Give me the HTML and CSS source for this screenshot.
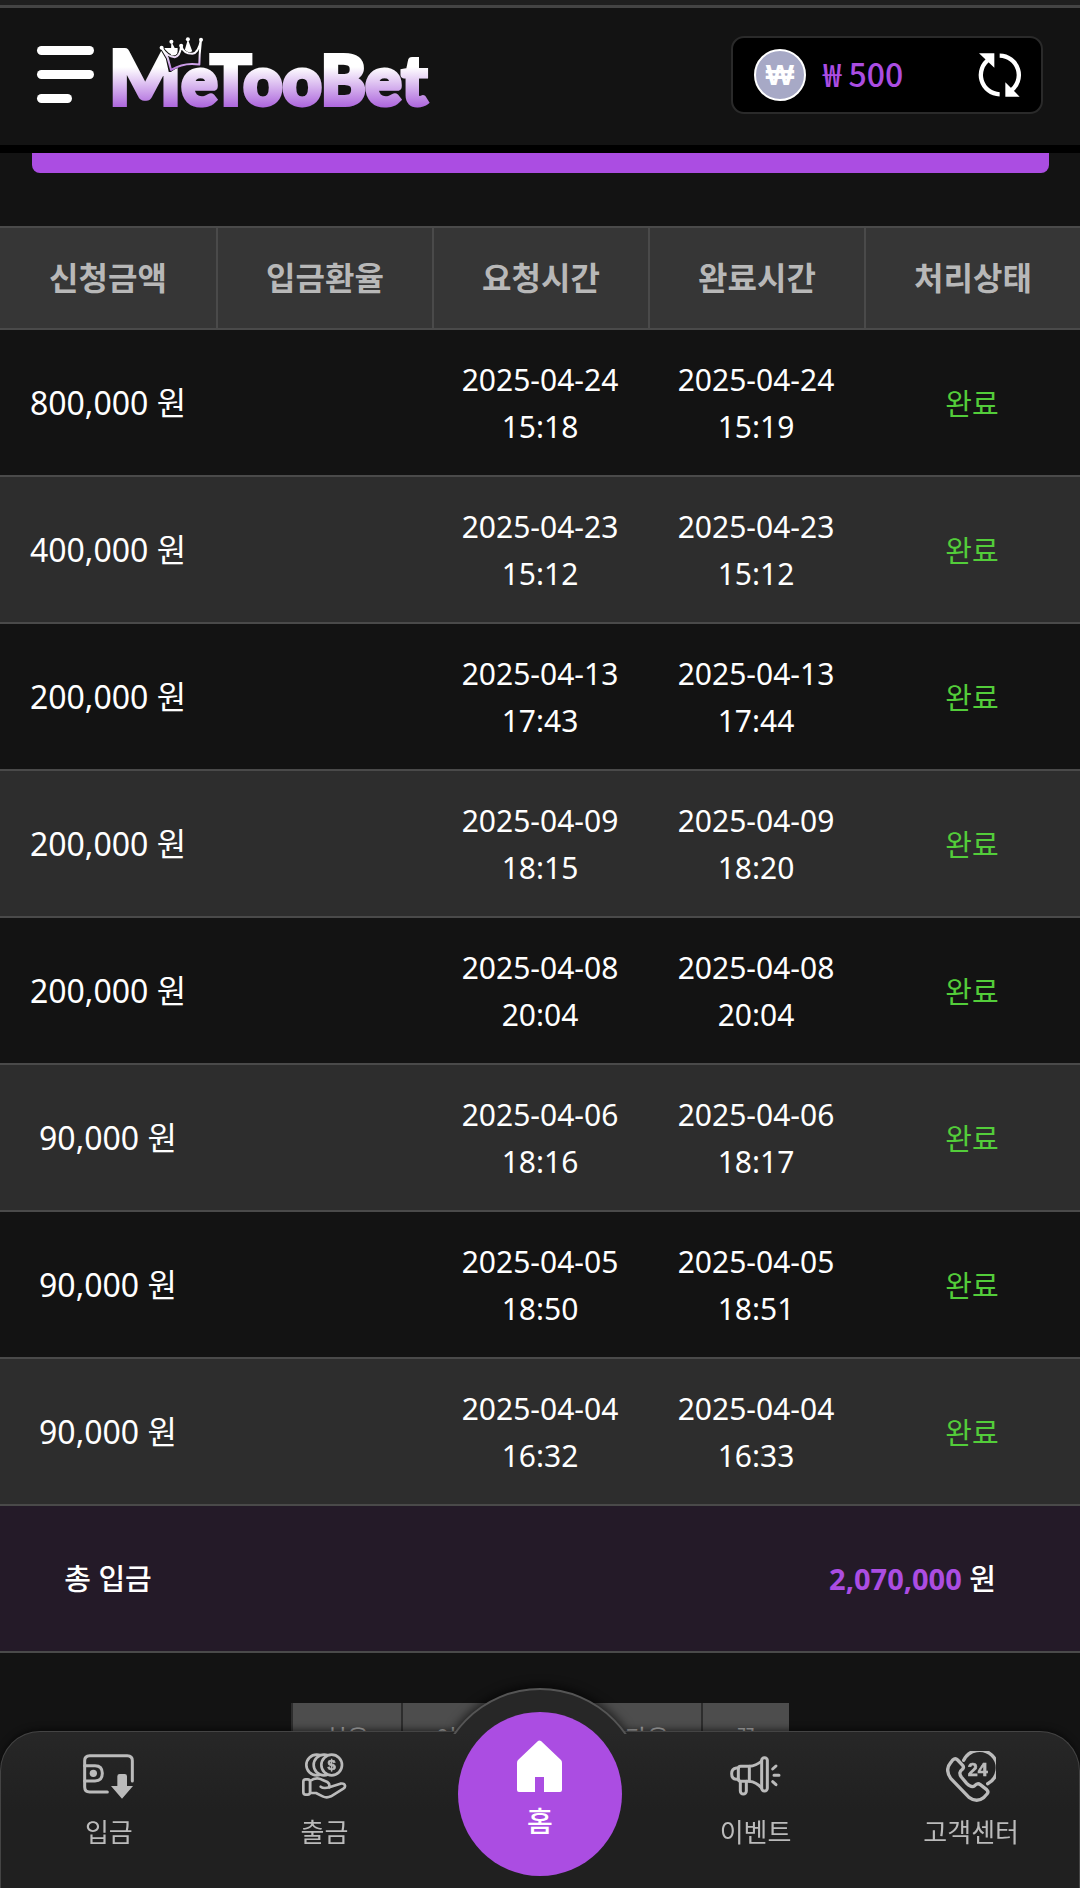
FILE: index.html
```html
<!DOCTYPE html>
<html lang="ko">
<head>
    <meta charset="UTF-8">
    <meta name="viewport" content="width=device-width, initial-scale=1.0">
    <title>MeTooBet</title>
    <link rel="stylesheet" href="styles.css">
</head>
<body>
    <header class="header">
        <button class="menu-btn" type="button" aria-label="메뉴">
            <span></span>
            <span></span>
            <span></span>
        </button>
        <a class="logo" href="#">
            <svg class="logo-text" viewBox="0 0 330 84" width="330" height="84">
                <defs>
                    <linearGradient id="logoFill" gradientUnits="userSpaceOnUse" x1="0" y1="16" x2="0" y2="76">
                        <stop offset="0.3" stop-color="#fff"/>
                        <stop offset="1" stop-color="#a95fdb"/>
                    </linearGradient>
                </defs>
                <text x="0" y="72"><tspan class="logo-m">M</tspan>eTooBet</text>
            </svg>
            <svg class="crown" viewBox="0 0 132 104" aria-hidden="true">
                <defs>
                    <linearGradient id="crownFill" x1="0" y1="0" x2="0" y2="1">
                        <stop offset="0.4" stop-color="#fff"/>
                        <stop offset="1" stop-color="#b877e0"/>
                    </linearGradient>
                </defs>
                <path d="M7 32L25 62L33 98Q75 68 119 80L121 52L124 8Q116 48 98 50Q72 50 65 26Q62 58 46 60Q22 58 7 32Z" fill="#131313" stroke="#131313" stroke-width="12"/>
                <g fill="none" stroke="url(#crownFill)" stroke-width="6" stroke-linejoin="round">
                    <path d="M7 32L25 62L35 98Q75 74 119 82L120 52L124 8Q116 48 98 50Q72 50 65 26Q62 58 46 60Q22 58 7 32Z"/>
                </g>
                <path d="M36 14L34 54Q46 58 54 48ZM85 7L76 38Q86 50 98 42Z" fill="#fff"/>
                <g fill="#fff">
                    <circle cx="7" cy="32" r="6"/>
                    <circle cx="36" cy="14" r="6"/>
                    <circle cx="65" cy="26" r="6"/>
                    <circle cx="85" cy="7" r="6"/>
                    <circle cx="124" cy="8" r="6"/>
                </g>
            </svg>
        </a>
        <div class="balance">
            <span class="coin">₩</span>
            <span class="amount">₩ 500</span>
            <button class="refresh" type="button" aria-label="새로고침">
                <svg viewBox="0 0 129 132" width="43" height="44" aria-hidden="true">
                    <path d="M65 124A58 58 0 0 1 34 18M65 8A58 58 0 0 1 97 114" fill="none" stroke="#fff" stroke-width="13"/>
                    <path d="M3 1H49V44ZM82 88V131H125Z" fill="#fff"/>
                </svg>
            </button>
        </div>
    </header>

    <main>
        <div class="banner"></div>

        <!-- 입금 내역 -->
        <table class="history">
            <thead>
                <tr>
                    <th>신청금액</th>
                    <th>입금환율</th>
                    <th>요청시간</th>
                    <th>완료시간</th>
                    <th>처리상태</th>
                </tr>
            </thead>
            <tbody>
                <tr>
                    <td class="money">800,000 원</td>
                    <td></td>
                    <td>2025-04-24<br>15:18</td>
                    <td>2025-04-24<br>15:19</td>
                    <td class="done">완료</td>
                </tr>
                <tr>
                    <td class="money">400,000 원</td>
                    <td></td>
                    <td>2025-04-23<br>15:12</td>
                    <td>2025-04-23<br>15:12</td>
                    <td class="done">완료</td>
                </tr>
                <tr>
                    <td class="money">200,000 원</td>
                    <td></td>
                    <td>2025-04-13<br>17:43</td>
                    <td>2025-04-13<br>17:44</td>
                    <td class="done">완료</td>
                </tr>
                <tr>
                    <td class="money">200,000 원</td>
                    <td></td>
                    <td>2025-04-09<br>18:15</td>
                    <td>2025-04-09<br>18:20</td>
                    <td class="done">완료</td>
                </tr>
                <tr>
                    <td class="money">200,000 원</td>
                    <td></td>
                    <td>2025-04-08<br>20:04</td>
                    <td>2025-04-08<br>20:04</td>
                    <td class="done">완료</td>
                </tr>
                <tr>
                    <td class="money">90,000 원</td>
                    <td></td>
                    <td>2025-04-06<br>18:16</td>
                    <td>2025-04-06<br>18:17</td>
                    <td class="done">완료</td>
                </tr>
                <tr>
                    <td class="money">90,000 원</td>
                    <td></td>
                    <td>2025-04-05<br>18:50</td>
                    <td>2025-04-05<br>18:51</td>
                    <td class="done">완료</td>
                </tr>
                <tr>
                    <td class="money">90,000 원</td>
                    <td></td>
                    <td>2025-04-04<br>16:32</td>
                    <td>2025-04-04<br>16:33</td>
                    <td class="done">완료</td>
                </tr>
            </tbody>
            <tfoot>
                <tr>
                    <td>총 입금</td>
                    <td class="total" colspan="4"><strong>2,070,000</strong> 원</td>
                </tr>
            </tfoot>
        </table>

        <div class="paging">
            <a href="#">처음</a>
            <a href="#">이전</a>
            <a href="#">1</a>
            <a href="#">다음</a>
            <a href="#">끝</a>
        </div>
    </main>

    <!-- 하단 메뉴 -->
    <nav class="bottom-nav">
        <div class="bump"></div>
        <a class="nav-item" href="#">
            <span class="nav-icon">
                <svg viewBox="0 0 153 135" width="51" height="45" aria-hidden="true">
                    <g fill="none" stroke="currentColor" stroke-width="9" stroke-linecap="round">
                        <path d="M73 114H20Q5 114 5 99V20Q5 5 20 5H133Q148 5 148 20V81"/>
                        <path d="M5 35H36Q58 35 58 58Q58 81 36 81H5"/>
                    </g>
                    <circle cx="31" cy="58" r="11" fill="currentColor"/>
                    <path d="M103 67Q103 60 110 60H125Q132 60 132 67V96H150L117 134L84 96H103Z" fill="currentColor"/>
                </svg>
            </span>
            입금
        </a>
        <a class="nav-item" href="#">
            <span class="nav-icon">
                <svg viewBox="0 0 135 138" width="45" height="46" aria-hidden="true">
                    <g fill="#242424" stroke="currentColor" stroke-width="8">
                        <circle cx="44" cy="36" r="31"/>
                        <circle cx="66" cy="36" r="31"/>
                        <circle cx="89" cy="36" r="31"/>
                    </g>
                    <text class="icon-dollar" x="89" y="52">$</text>
                    <g fill="#222" stroke="currentColor" stroke-width="8" stroke-linejoin="round" stroke-linecap="round">
                        <path d="M24 84Q43 70 60 80L76 87Q84 92 82 103L115 92Q127 90 129 98Q130 103 124 107L87 130Q74 136 62 130L42 120H24Z"/>
                        <path d="M56 101Q64 108 82 103" fill="none"/>
                        <rect x="4" y="79" width="20" height="46" rx="7"/>
                    </g>
                </svg>
            </span>
            출금
        </a>
        <a class="nav-item home" href="#">
            <svg viewBox="0 0 45 52" width="45" height="52" aria-hidden="true">
                <path d="M21 1Q22 0 24 1L44 20Q45 21 45 23V50Q45 52 43 52H27V37H18V52H2Q0 52 0 50V23Q0 21 1 20Z" fill="#fff"/>
            </svg>
            홈
        </a>
        <a class="nav-item" href="#">
            <span class="nav-icon">
                <svg viewBox="0 0 153 120" width="51" height="40" aria-hidden="true">
                    <g fill="none" stroke="currentColor" stroke-width="9" stroke-linecap="round" stroke-linejoin="round">
                        <rect x="95" y="5" width="17" height="100" rx="8"/>
                        <path d="M95 15Q78 30 58 31V76Q78 78 95 96"/>
                        <path d="M58 31H32Q25 31 25 38V69Q25 76 32 76H58"/>
                        <path d="M25 36H19Q5 38 5 53Q5 68 19 70H25"/>
                        <path d="M31 76V105A9 9 0 0 0 49 105V76"/>
                        <path d="M128 39L138 30M132 58H147M128 77L138 86"/>
                    </g>
                </svg>
            </span>
            이벤트
        </a>
        <a class="nav-item" href="#">
            <span class="nav-icon">
                <svg viewBox="0 0 150 153" width="50" height="51" aria-hidden="true">
                    <g fill="none" stroke="currentColor" stroke-width="10" stroke-linecap="round" stroke-linejoin="round">
                        <path d="M53 28A53 53 0 1 1 125 98"/>
                        <path d="M20 27Q28 20 35 27L50 43Q55 49 49 55Q36 64 46 78L62 97Q77 112 86 104Q95 94 103 101L122 116Q129 123 123 129L113 140Q92 156 69 139L14 82Q-4 56 14 35Z"/>
                    </g>
                    <text class="icon-24" x="95" y="74">24</text>
                </svg>
            </span>
            고객센터
        </a>
    </nav>
</body>
</html>
```
FILE: styles.css
```css
* {
    box-sizing: border-box;
}
body {
    margin: 0;
    background: #131313;
    color: #fff;
    font-family: "Noto Sans", "Noto Sans CJK KR", sans-serif;
    font-size: 28px;
}
a {
    color: inherit;
    text-decoration: none;
}
button {
    padding: 0;
    border: 0;
    background: none;
    cursor: pointer;
}

/* header */
.header {
    position: sticky;
    top: 0;
    z-index: 5;
    display: flex;
    align-items: center;
    height: 153px;
    padding: 0 37px 4px;
    background: #131313;
    border-top: 8px solid #444;
    border-bottom: 8px solid #000;
}
.header::before {
    content: "";
    position: absolute;
    top: -8px;
    left: 0;
    right: 0;
    height: 5px;
    background: #1f1f1f;
}
.menu-btn {
    display: flex;
    flex-direction: column;
    gap: 15px;
    width: 57px;
}
.menu-btn span {
    width: 57px;
    height: 9px;
    border-radius: 5px;
    background: #fff;
}
.menu-btn span:last-child {
    width: 35px;
}
.logo {
    position: relative;
    display: flex;
    margin-left: 15px;
}
.logo-text {
    overflow: visible;
}
.logo-text text {
    fill: url(#logoFill);
    stroke: url(#logoFill);
    stroke-width: 4px;
    stroke-linejoin: miter;
    font-family: Lato, sans-serif;
    font-weight: 900;
    font-size: 68px;
}
.logo-text .logo-m {
    font-size: 76px;
}
.crown {
    position: absolute;
    left: 50px;
    top: 4px;
    width: 45px;
    height: 35px;
}
.balance {
    display: flex;
    align-items: center;
    width: 312px;
    height: 78px;
    margin-left: auto;
    padding: 0 20px 0 21px;
    background: #000;
    border: 2px solid #2a2a2a;
    border-radius: 13px;
}
.coin {
    width: 52px;
    height: 52px;
    border: 2px solid #fff;
    border-radius: 50%;
    background: #a7a9c6;
    font-family: "Open Sans", sans-serif;
    font-weight: 800;
    font-size: 30px;
    line-height: 46px;
    text-align: center;
}
.amount {
    margin-left: 17px;
    padding-bottom: 4px;
    color: #ab4de2;
    font-family: "Noto Sans CJK KR", sans-serif;
    font-weight: 500;
    font-size: 32px;
    line-height: 40px;
}
.refresh {
    display: flex;
    margin-left: auto;
}

.banner {
    height: 20px;
    margin: 0 31px 53px 32px;
    background: #ab4de2;
    border-radius: 0 0 8px 8px;
}

/* table */
.history {
    width: 100%;
    table-layout: fixed;
    border-collapse: separate;
    border-spacing: 0;
    text-align: center;
}
.history th {
    height: 104px;
    padding: 0 0 4px;
    background: #363636;
    border: solid #4a4a4a;
    border-width: 2px 0 2px 2px;
    color: #b8b8b8;
    font-weight: 700;
    font-size: 32px;
}
.history th:first-child {
    border-left: 0;
}
.history td {
    height: 147px;
    padding: 0;
    border-bottom: 2px solid #4a4a4a;
    font-size: 30px;
    line-height: 47px;
}
.history tbody tr:nth-child(even) {
    background: #2d2d2d;
}
.history .money {
    font-size: 32px;
}
.history .done {
    padding-top: 2px;
    color: #53cd3a;
    font-size: 29px;
}
.history tfoot {
    background: #241a28;
}
.history tfoot td {
    font-size: 29px;
    font-weight: 500;
}
.history .total {
    padding-right: 84px;
    text-align: right;
}
.total strong {
    color: #ab4de2;
    font-weight: 700;
}

.paging {
    display: flex;
    justify-content: center;
    margin-top: 50px;
}
.paging a {
    height: 70px;
    padding: 0 32px;
    background: #4d4d4d;
    border-left: 2px solid #2d2d2d;
    color: #aaa;
    font-size: 24px;
    line-height: 70px;
}

/* bottom menu */
.bottom-nav {
    position: fixed;
    left: 0;
    right: 0;
    bottom: 0;
    display: grid;
    grid-template-columns: repeat(5, 1fr);
    height: 157px;
    background: linear-gradient(#272727, #202020 50%);
    border: 1px solid #444;
    border-bottom: 0;
    border-radius: 40px 40px 0 0;
    box-shadow: 0 -2px 6px rgba(0, 0, 0, 0.5);
}
.bump {
    position: absolute;
    left: 50%;
    top: -44px;
    width: 212px;
    height: 46px;
    margin-left: -106px;
    overflow: hidden;
    filter: drop-shadow(0 -3px 5px rgba(0, 0, 0, 0.6));
    clip-path: inset(-20px -20px 0 -20px);
}
.bump::before {
    content: "";
    display: block;
    height: 212px;
    background: #272727;
    border: 2px solid #555;
    border-radius: 50%;
}
.nav-item {
    display: flex;
    flex-direction: column;
    align-items: center;
    padding-top: 17px;
    color: #bbb;
    font-size: 26px;
    line-height: 58px;
}
.nav-icon {
    display: flex;
    align-items: center;
    height: 54px;
}
.home {
    position: relative;
    top: -20px;
    justify-self: center;
    width: 164px;
    height: 164px;
    padding-top: 28px;
    border-radius: 50%;
    background: #ab4de2;
    color: #fff;
    font-size: 28px;
    font-weight: 500;
}
.icon-dollar,
.icon-24 {
    fill: currentColor;
    stroke: currentColor;
    stroke-width: 2px;
    font-family: "Liberation Sans", Arial, sans-serif;
    font-weight: 700;
    text-anchor: middle;
}
.icon-dollar {
    font-size: 44px;
}
.icon-24 {
    font-size: 54px;
}
```
